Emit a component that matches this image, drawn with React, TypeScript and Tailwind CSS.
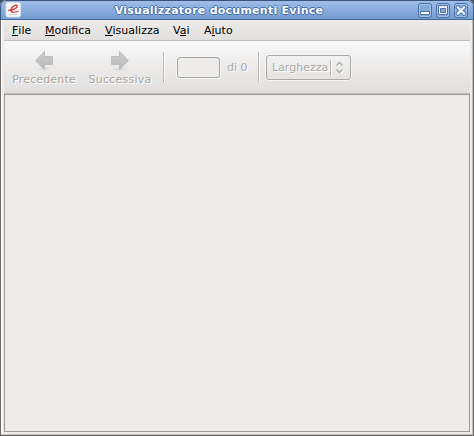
import type { ReactNode } from 'react';

const Key = ({ children }: { children: ReactNode }) => (
  <span className="relative after:absolute after:inset-x-0 after:bottom-[1px] after:h-px after:bg-black">{children}</span>
);

const Separator = () => (
  <div className="mt-[11px] h-[30px] w-[2px] shrink-0 border-l border-[#b9b8b6] bg-white" />
);

function Arrow({ right = false }: { right?: boolean }) {
  return (
    <svg width="20" height="23" viewBox="0 0 20 23" className="block">
      <defs>
        <linearGradient id="arrowFill" x1="0" y1="0" x2="0" y2="1">
          <stop offset="0" stopColor="#cccccb" />
          <stop offset="1" stopColor="#b8b9b9" />
        </linearGradient>
        <radialGradient id="arrowShadow">
          <stop offset="0" stopColor="#d0cfce" />
          <stop offset="1" stopColor="#e9e8e7" stopOpacity="0" />
        </radialGradient>
      </defs>
      <ellipse cx="10" cy="19" rx="10" ry="3" fill="url(#arrowShadow)" />
      <path
        transform={right ? 'translate(20 0) scale(-1 1)' : undefined}
        d="M10.5 1.5 1.5 10.5 10.5 19.5V14.5H18.5V6.5H10.5Z"
        fill="url(#arrowFill)"
        stroke="#bcbdbc"
      />
    </svg>
  );
}

function WindowButton({ kind }: { kind: 'min' | 'max' | 'close' }) {
  return (
    <svg width="14" height="15" viewBox="0 0 14 15" className="block">
      <rect x=".5" y=".5" width="13" height="14" rx="2.5" fill="#83a8da" stroke="#4a70a6" />
      <rect x="1.5" y="1.5" width="11" height="12" rx="1.5" fill="none" stroke="#a1bfe8" />
      {kind === 'min' && <path d="M2.5 8.5h9v3h-9z" fill="white" stroke="#4a70a6" />}
      {kind === 'max' && (
        <>
          <path d="M2.500 2.500h9v9h-9z" fill="#eef3fb" stroke="#4a70a6" />
          <path d="M4.500 5.500h5v4h-5z" fill="#83a8da" stroke="#4a70a6" />
        </>
      )}
      {kind === 'close' && (
        <>
          <path d="m4 4.500 6 6m0-6-6 6" stroke="#4a70a6" strokeWidth="4" strokeLinecap="square" />
          <path d="m4 4.500 6 6m0-6-6 6" stroke="#f4f8fd" strokeWidth="2.300" strokeLinecap="square" />
        </>
      )}
    </svg>
  );
}

const etched = '[text-shadow:1px_1px_0_#fff]';

export default function App() {
  return (
    <div className="h-[436px] w-[474px] bg-[#435268] font-['DejaVu_Sans',sans-serif] text-[11px] leading-[14px] text-black">
      <div className="flex h-[436px] w-[474px] flex-col overflow-hidden rounded-t-[6px] bg-[#edeceb]">
        <header className="flex h-5 shrink-0 items-start rounded-t-[6px] border border-[#38547f] border-b-[#42689e] bg-linear-to-b from-[#9fbde8] to-[#749bd0] pt-[1px] pr-[5px] pl-[4px]">
          <svg width="17" height="16" viewBox="0 0 17 16" className="block shrink-0">
            <rect x="1" y=".5" width="14.5" height="14.5" rx="2" fill="#f7f7f7" stroke="#d5e1f2" />
            <path d="M3 8.200C7 8.500 12.500 6.300 12.300 4 11.800 2 7 3.800 6 7.500 5.300 10.800 9 10.800 13.500 9.300" fill="none" stroke="#d5302d" strokeWidth="1.200" />
            <path d="M3.500 12.500h9.500" stroke="#d3d6da" />
          </svg>
          <h1 className="w-[394px] shrink-0 pt-[1px] text-center text-[11px] font-bold leading-[15px] tracking-[0.25px] text-white [text-shadow:1px_0_0_#426da9,-1px_0_0_#426da9,0_1px_0_#426da9,0_-1px_0_#426da9]">
            Visualizzatore documenti Evince
          </h1>
          <div className="mt-[1px] ml-auto flex gap-[4px]">
            <WindowButton kind="min" />
            <WindowButton kind="max" />
            <WindowButton kind="close" />
          </div>
        </header>
        <div className="flex min-h-0 grow flex-col border-x border-b border-[#6c6a68]">
          <div className="flex min-h-0 grow flex-col border-l border-r border-b border-l-white border-r-[#c3c1bf] border-b-[#c3c1bf] pr-[2px] pb-[2px] pl-[2px]">
            <nav className="flex h-[21px] shrink-0 gap-[14px] border-b border-[#c0bebc] bg-linear-to-b from-[#edeceb] to-[#e1dfdd] pt-[4px] pl-2">
              <span className="w-[19px]"><Key>F</Key>ile</span>
              <span className="w-[46px]"><Key>M</Key>odifica</span>
              <span className="w-[54px]"><Key>V</Key>isualizza</span>
              <span className="w-[17px]">V<Key>a</Key>i</span>
              <span>A<Key>i</Key>uto</span>
            </nav>
            <div className={`flex h-[53px] shrink-0 border-b border-[#c0bebc] bg-linear-to-b from-[#f8f8f8] to-[#e1dfdd] text-[#a9a7a5] ${etched}`}>
              <div className="flex w-[79px] flex-col items-center pt-[9px]">
                <Arrow />
                <span className="pl-[1px] tracking-[0.15px]">Precedente</span>
              </div>
              <div className="flex w-[73px] flex-col items-center pt-[9px]">
                <Arrow right />
                <span className="pl-[1px] tracking-[0.25px]">Successiva</span>
              </div>
              <div className="ml-[7px]"><Separator /></div>
              <div className="mt-[15px] ml-[11px] h-[23px] w-[45px] rounded-[4px] border border-[#f8f8f8]">
                <div className="h-[21px] w-[43px] rounded-[3px] border border-[#a5a4a1] bg-[#edeceb]" />
              </div>
              <span className="mt-[20px] ml-[6px] w-[23px] whitespace-nowrap">di 0</span>
              <div className="ml-[8px]"><Separator /></div>
              <div className="mt-[13px] ml-[5px] h-[27px] w-[87px] rounded-[4px] border border-[#f6f6f6]">
                <div className="flex h-[25px] w-[85px] rounded-[3px] border border-[#a9a8a6] bg-linear-to-b from-[#f3f2f2] to-[#e5e4e2] pl-[5px]">
                  <span className="mt-[5px] w-[58px]">Larghezza</span>
                  <i className="mt-[4px] h-4 w-[2px] border-l border-[#b9b8b6] bg-white" />
                  <svg width="10" height="13" viewBox="0 0 10 13" className="mt-[5px] ml-[3px]">
                    <path d="m2.500 5.500 3-3 3 3m-6 4 3 3 3-3" fill="none" stroke="#fff" strokeWidth="1.200" />
                    <path d="m1.500 4.500 3-3 3 3m-6 4 3 3 3-3" fill="none" stroke="#a9a8a6" strokeWidth="1.400" />
                  </svg>
                </div>
              </div>
            </div>
            <main className="min-h-0 grow border border-[#9c9a97] bg-[#edeceb]" />
          </div>
        </div>
      </div>
    </div>
  );
}
